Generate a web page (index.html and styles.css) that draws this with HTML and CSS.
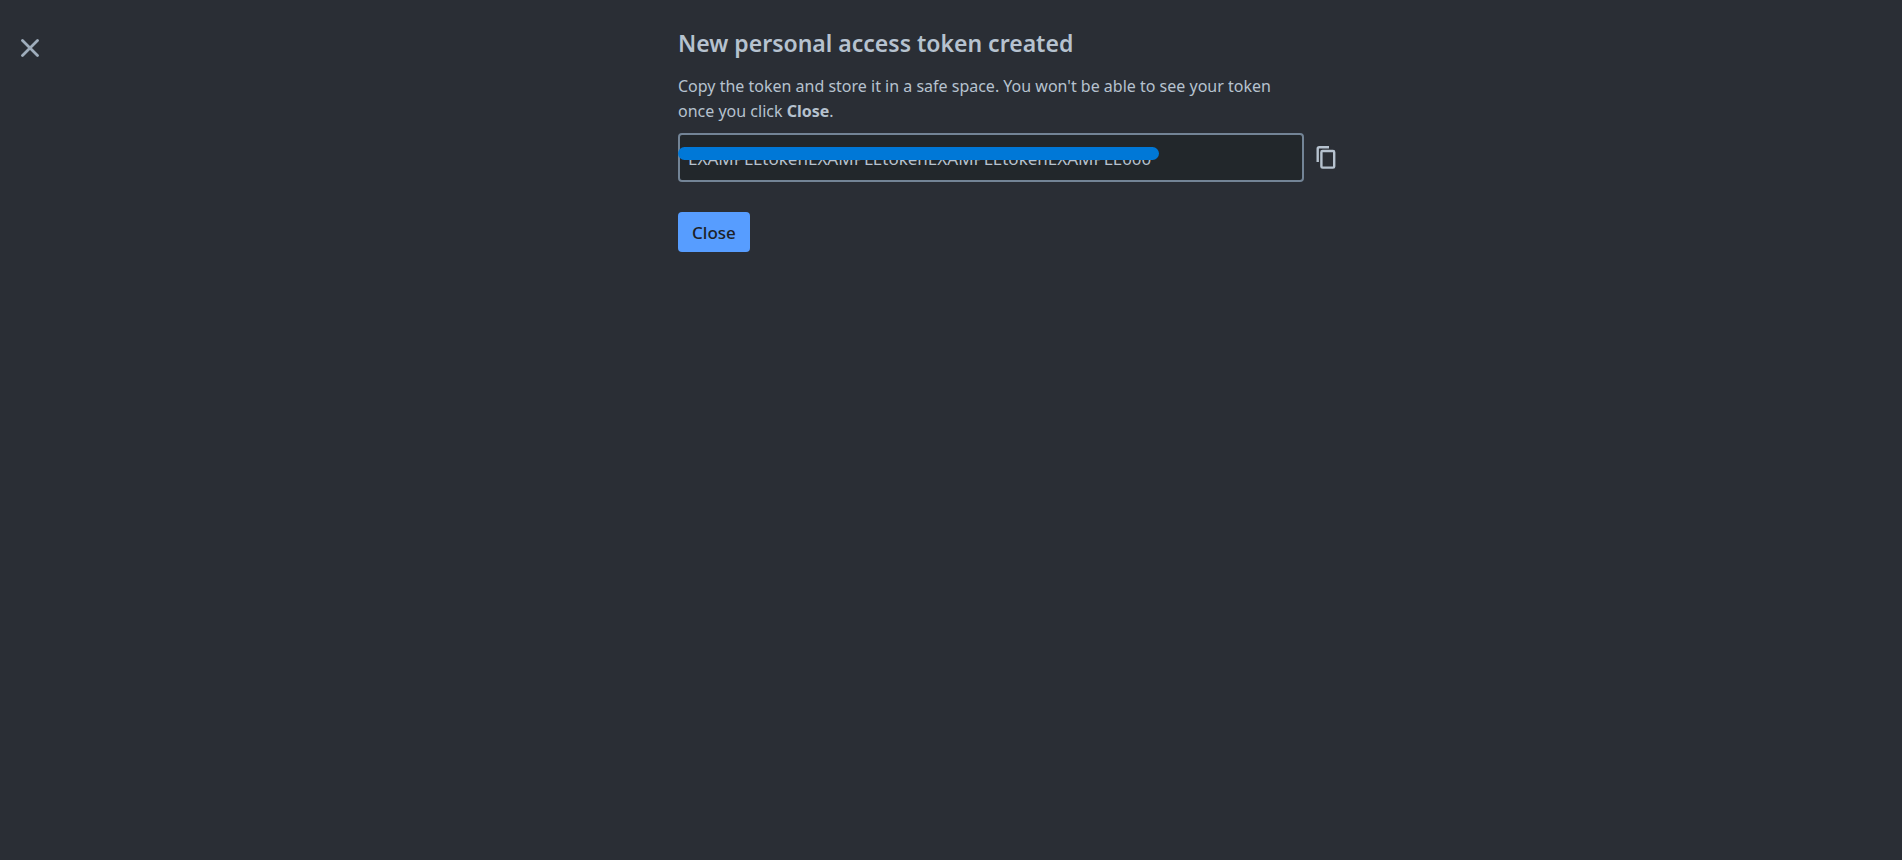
FILE: index.html
```html
<!DOCTYPE html>
<html lang="en">
  <head>
    <meta charset="UTF-8" />
    <meta name="viewport" content="width=device-width, initial-scale=1.0" />
    <title>New personal access token created</title>
    <link rel="stylesheet" href="styles.css">
  </head>
  <body>
    <div class="page">
      <header class="sidebar">
        <button type="button" class="icon-button" aria-label="Dismiss">
          <svg width="18" height="18" viewBox="0 0 18 18" fill="none" stroke="currentColor" stroke-width="2.8" stroke-linecap="round">
            <path d="M1.5 1.5L16.5 16.5M16.5 1.5L1.5 16.5" />
          </svg>
        </button>
      </header>
      <main class="content">
        <h1>New personal access token created</h1>
        <p>
          Copy the token and store it in a safe space. You won't be able to see
          your token once you click <strong>Close</strong>.
        </p>
        <div class="token-row">
          <div class="token-field">
            <input type="text" value="EXAMPLEtokenEXAMPLEtokenEXAMPLEtokenEXAMPLE000" aria-label="Token" readonly />
            <span class="redaction"></span>
          </div>
          <button type="button" class="icon-button copy" aria-label="Copy token">
            <svg width="20" height="24" viewBox="0 0 20 24" fill="none" stroke="currentColor" stroke-width="2.4">
              <path d="M1.7 16V2.7a1.5 1.5 0 0 1 1.5-1.5H13" />
              <rect x="5.4" y="5" width="12.8" height="16.6" rx="1.2" />
            </svg>
          </button>
        </div>
        <button type="button" class="close-button">Close</button>
      </main>
    </div>
  </body>
</html>
```
FILE: styles.css
```css
:root {
  --text: #b6c2cf;
  --border: #738496;
  --input: #22272b;
}

body {
  margin: 0;
  min-height: 100vh;
  background: #2a2e35;
  color: var(--text);
  font-family: "Segoe UI", "Noto Sans", sans-serif;
  font-size: 16px;
  line-height: 25px;
}

.page {
  display: flex;
}

.sidebar {
  flex: 0 0 118px;
  box-sizing: border-box;
  padding: 39px 0 0 21px;
}

.content {
  width: 100%;
  max-width: 664px;
  margin: 0 auto;
  padding-top: 27px;
}

h1 {
  margin: 0 0 15px;
  font-size: 23px;
  font-weight: 600;
  line-height: 32px;
}

p {
  max-width: 626px;
  margin: 0 0 9px;
}

.icon-button {
  display: flex;
  padding: 0;
  border: 0;
  background: none;
  color: #9fadbc;
  cursor: pointer;
}

.copy {
  color: var(--text);
}

.token-row {
  display: flex;
  align-items: center;
  gap: 12px;
  margin-bottom: 30px;
}

.token-field {
  position: relative;
  flex: 0 1 626px;
}

.token-field input {
  display: block;
  box-sizing: border-box;
  width: 100%;
  height: 49px;
  padding: 2px 8px 0;
  border: 2px solid var(--border);
  border-radius: 4px;
  background: var(--input);
  color: var(--text);
  font: inherit;
  font-size: 17px;
}

/* covers the upper part of the token */
.redaction {
  position: absolute;
  top: 14px;
  left: 0;
  width: 481px;
  height: 13px;
  border-radius: 7px;
  background: #0078d7;
}

.close-button {
  height: 40px;
  padding: 0 14px;
  border: 0;
  border-radius: 4px;
  background: #579dff;
  color: #1d2125;
  font: inherit;
  font-size: 17px;
  font-weight: 500;
  cursor: pointer;
}
```
